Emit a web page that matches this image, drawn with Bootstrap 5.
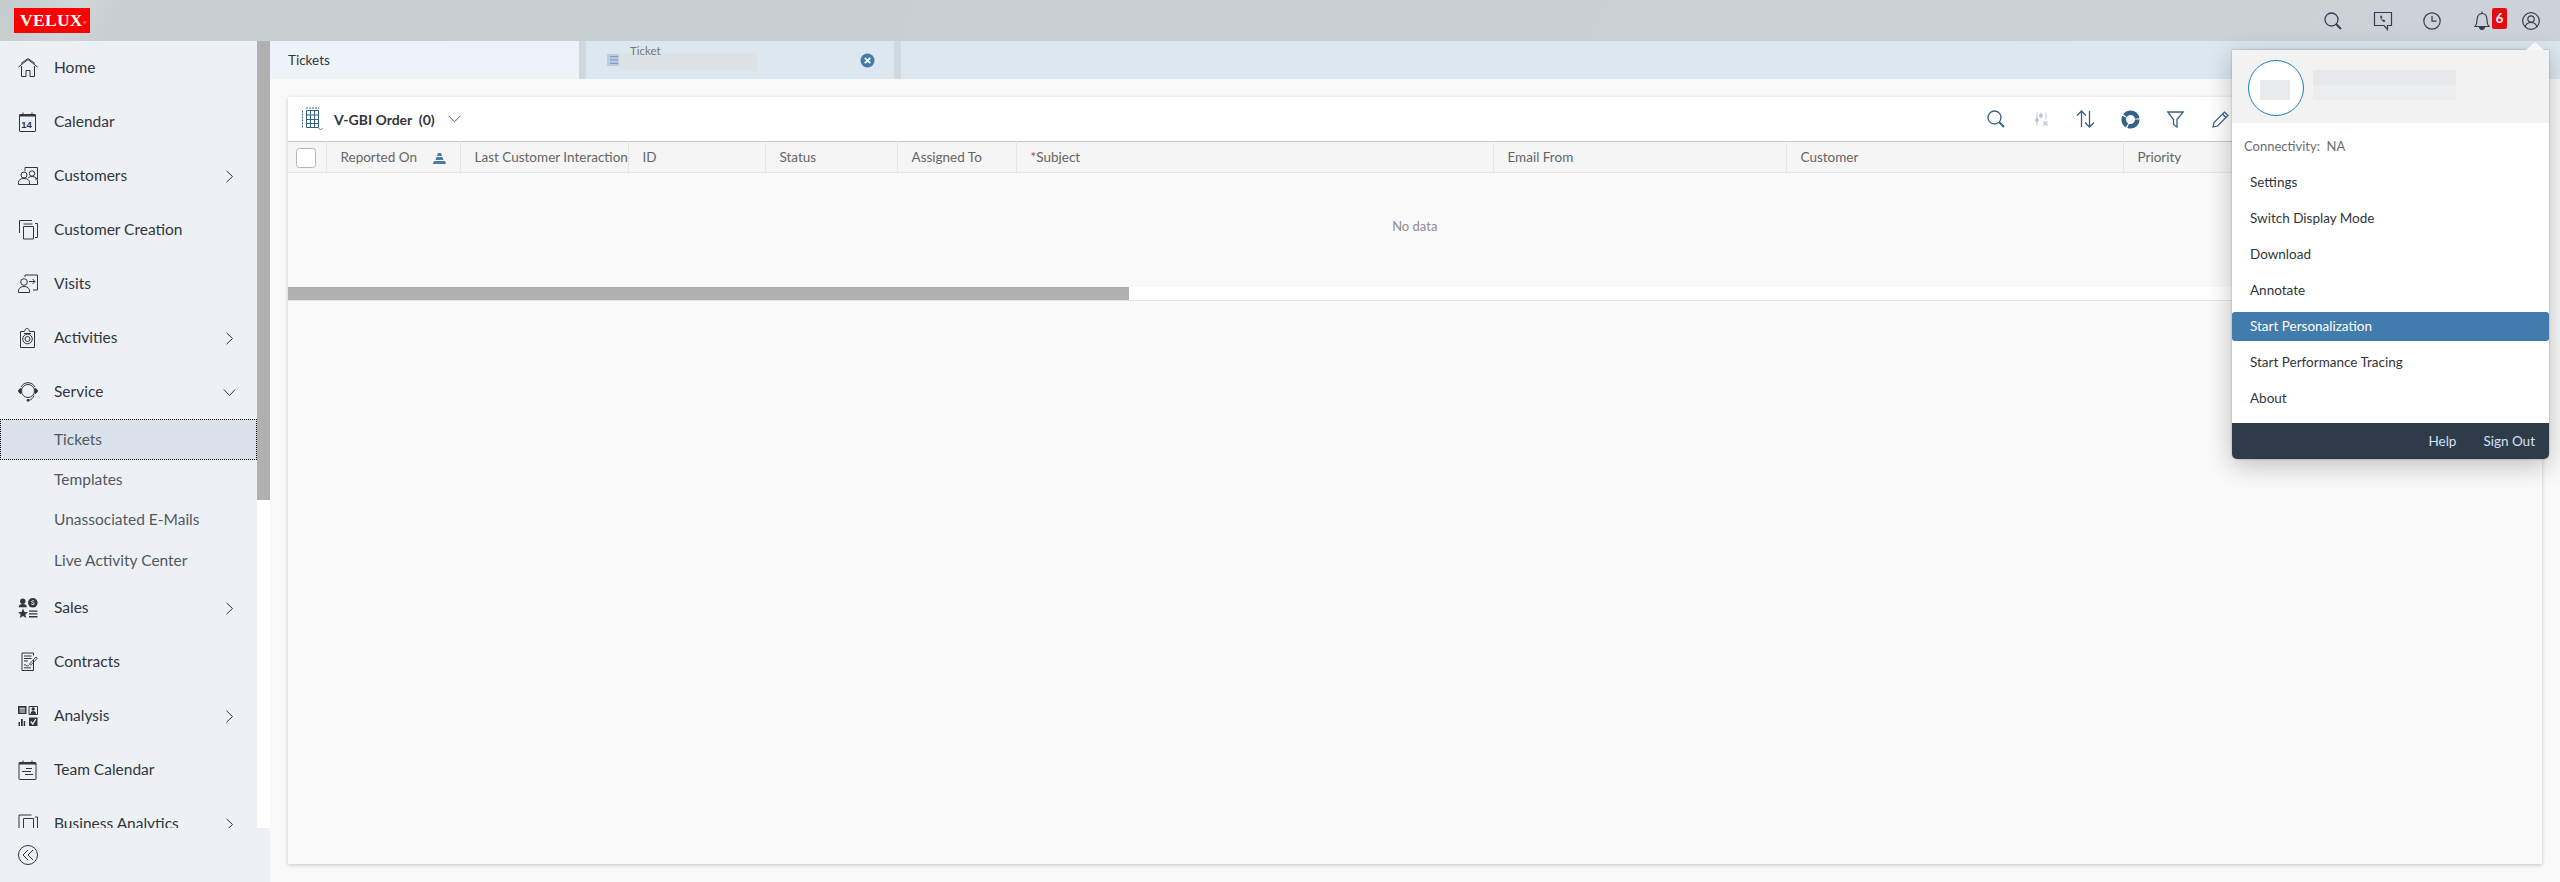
<!DOCTYPE html>
<html lang="en">
<head>
<meta charset="UTF-8" />
<title>Tickets</title>
<link href="https://cdn.jsdelivr.net/npm/bootstrap@5.3.3/dist/css/bootstrap.min.css" rel="stylesheet"/>
<style>
    html, body { height: 100%; overflow: hidden; }
    body { font-family: Lato, "Open Sans", sans-serif; color: #32363a; background: #f9f9f9; font-size: 14px; }

    /* shell bar */
    .shell-bar { height: 41px; padding-left: 14px; padding-right: 4px; background: linear-gradient(115deg, #c3cbcd 0, #d0d7d8 3%, #c6ced1 5%, #c8d0d3 40%, #ccd3d8 100%); }
    .velux-logo { width: 76px; height: 25px; padding-left: 6px; background: #f00; color: #fff; font-family: "Liberation Serif", serif; font-weight: 700; font-size: 17.5px; letter-spacing: .3px; line-height: 25px; white-space: nowrap; }
    .velux-logo sup { font-size: 5px; top: -.5em; letter-spacing: 0; }
    .shell-icon { width: 49.5px; height: 41px; display: flex; align-items: center; justify-content: center; position: relative; }
    .shell-badge { position: absolute; left: 35px; top: 8px; width: 15px; height: 21px; background: #e60a14; border-radius: 2px; color: #fff; font-size: 13px; font-weight: 700; line-height: 21px; text-align: center; }

    /* side navigation */
    .app-body { height: 841px; }
    .side-col { width: 270px; flex: none; }
    .side-top { height: 787px; }
    .side-nav { width: 257px; background: #edf1f6; overflow: hidden; }
    .side-track { width: 13px; background: #fff; }
    .side-thumb { height: 459px; background: #b0b0b0; }
    .side-foot { height: 54px; background: #edf1f6; padding-left: 18px; }
    .nav-row { height: 54px; padding-left: 18px; padding-right: 23px; font-size: 15.5px; color: #32363a; }
    .nav-ico { width: 20px; height: 20px; flex: none; margin-right: 16px; }
    .nav-sub { height: 40.5px; padding-left: 54px; padding-bottom: 1px; font-size: 15.5px; color: #53585e; }
    .nav-sub.is-current { background: #dae2ec; outline: 1px dotted #000; outline-offset: -1px; padding-bottom: 0; }
    .chev-down { margin-right: -2px; }

    /* tab strip */
    .main-col { min-width: 0; background: #f9f9f9; }
    .tab-strip { height: 38px; background: #cfd8df; gap: 7px; }
    .tab-home { width: 309px; background: #edf3f8; padding-left: 18px; font-size: 13.5px; }
    .tab-ticket { width: 308px; background: #dde7f0; position: relative; }
    .tab-rest { background: #dce7f0; }
    .tab-label { position: absolute; left: 44px; top: 1px; font-size: 11.5px; color: #74777a; z-index: 1; }
    .tab-blur { position: absolute; left: 33px; top: 12px; width: 138px; height: 18px; background: #dde2e6; }
    .tab-doc { position: absolute; left: 21px; top: 13px; }
    .tab-close { position: absolute; left: 274px; top: 12px; }

    /* worklist */
    .work-area { padding: 18px; height: 803px; }
    .work-card { width: 2254px; height: 767px; background: #f9f9f9; box-shadow: 0 1px 4px rgba(0,0,0,.22); }
    .work-tools { height: 44px; background: #fff; padding-left: 13px; }
    .work-title { font-size: 14px; font-weight: 700; margin-left: 11px; }
    .work-chev { margin-left: 13px; }
    .tool-btn { width: 45px; display: flex; justify-content: center; }
    .tool-set { position: absolute; left: 1685px; top: 0; height: 44px; }
    .grid-head { table-layout: fixed; width: 2254px; margin: 0; }
    .grid-head th { height: 31px; padding: 0 0 0 14px; background: #f5f5f5; border-top: 1px solid #c8c8c8; border-bottom: 1px solid #e5e5e5; border-right: 1px solid #e5e5e5; font-size: 13.5px; font-weight: 400; color: #666; vertical-align: middle; white-space: nowrap; overflow: hidden; box-shadow: none; }
    .grid-head td { height: 114px; background: #f9f9f9; border: 0; text-align: center; vertical-align: middle; color: #8b8e90; font-size: 13px; box-shadow: none; padding: 0 0 6px; }
    .c-chk { width: 38px; } .c-rep { width: 134px; } .c-last { width: 168px; } .c-id { width: 137px; } .c-stat { width: 132px; }
    .c-asg { width: 119px; } .c-subj { width: 477px; } .c-mail { width: 293px; } .c-cust { width: 337px; }
    .grid-head .c-chk { padding: 0 0 0 8px; }
    .grid-check { width: 20px; height: 20px; margin: 0; border-color: #b5b5b5; border-radius: 4px; vertical-align: middle; }
    .req-star { color: #c33; }
    .hscroll { height: 14px; background: #fff; border-bottom: 1px solid #e5e5e5; }
    .hscroll-thumb { width: 841px; height: 13px; background: #b0b0b0; }

    /* user popover */
    .user-pop { position: absolute; left: 2232px; top: 50px; width: 317px; height: 409px; background: #fff; border-radius: 0 0 5px 5px; box-shadow: 0 6px 26px rgba(0,0,0,.24), 0 0 2px rgba(0,0,0,.35); }
    .user-pop::before { content: ""; position: absolute; right: 5px; top: -8px; border-left: 9px solid transparent; border-right: 9px solid transparent; border-bottom: 8px solid #f6f6f6; }
    .pop-head { height: 73px; background: #f2f2f2; }
    .pop-avatar { position: absolute; left: 16px; top: 10px; width: 56px; height: 56px; background: #fff; border: 1.5px solid #1a7fc1; border-radius: 50%; }
    .pop-avatar span { position: absolute; left: 11px; top: 19px; width: 30px; height: 20px; background: #e9eaeb; }
    .pop-blur { position: absolute; left: 81px; top: 20px; width: 143px; height: 30px; background: linear-gradient(#e6e8e9 50%, #ebedee 50%); }
    .pop-conn { height: 41px; padding: 14px 0 0 12px; font-size: 13px; color: #6a6d70; }
    .pop-list .list-group-item { height: 36px; padding: 0 0 0 18px; border: 0; display: flex; align-items: center; font-size: 13.5px; color: #32363a; background: transparent; border-radius: 0; }
    .pop-list .list-group-item.active { height: 29px; margin: 3.5px 0; background: #427cac; color: #fff; border-radius: 3px; }
    .pop-foot { position: absolute; left: 0; right: 0; bottom: 0; height: 36px; background: #2f3b48; border-radius: 0 0 5px 5px; padding-right: 14px; gap: 27px; color: #cfe2f7; font-size: 13.5px; }
</style>
</head>
<body>
    <!-- barre du haut -->
    <header class="shell-bar d-flex align-items-center justify-content-between">
        <div class="velux-logo">VELUX<sup>®</sup></div>
        <div class="d-flex">
            <div class="shell-icon"><svg width="18" height="18" viewBox="0 0 18 18" fill="none" stroke="#32404c" stroke-width="1.3"><circle cx="7.500" cy="7.500" r="6.500"/><path d="M12 12l5 5" stroke-width="2"/></svg></div>
            <div class="shell-icon"><svg width="20" height="20" viewBox="0 0 20 20" fill="none" stroke="#32404c" stroke-width="1.2"><path d="M1.500 1.500h17v13h-4v4l-3.500-4H1.500z"/><path d="M8 4.500c-1 .6-1 2 0 3.800s2.300 2.800 3.600 2.600l.6-1.500-1.700-1-.8.7c-.6-.4-1-1-1.300-1.800l.9-.6-.5-2z" fill="#32404c" stroke="none"/></svg></div>
            <div class="shell-icon"><svg width="18" height="18" viewBox="0 0 18 18" fill="none" stroke="#32404c" stroke-width="1.2"><circle cx="9" cy="9" r="8.200"/><path d="M9 4v5.200h4.500"/></svg></div>
            <div class="shell-icon"><svg width="16" height="19" viewBox="0 0 16 19" fill="none" stroke="#32404c" stroke-width="1.2"><path d="M1 15.500c1.500-1.500 2-3 2-6.500 0-4 2-6.500 5-6.500s5 2.500 5 6.500c0 3.500.5 5 2 6.500z"/><path d="M8 .5v2"/><path d="M5.500 16.500c.3 1.500 1.300 2 2.500 2s2.200-.5 2.500-2z" fill="#32404c"/></svg><span class="shell-badge">6</span></div>
            <div class="shell-icon"><svg width="18" height="18" viewBox="0 0 18 18" fill="none" stroke="#32404c" stroke-width="1.2"><circle cx="9" cy="9" r="8.300"/><circle cx="9" cy="7" r="3.200"/><path d="M3.200 15c.6-3 3-4.500 5.800-4.500s5.200 1.500 5.800 4.500"/></svg></div>
        </div>
    </header>

    <div class="app-body d-flex">
        <!-- menu de gauche -->
        <aside class="side-col d-flex flex-column">
            <div class="side-top d-flex">
                <nav class="side-nav">
                    <div class="nav-row d-flex align-items-center">
                        <svg class="nav-ico" viewBox="0 0 20 20" fill="none" stroke="#32363a"><path d="M.5 9L10 1.500 19.500 9M3 5.500L10 .5l7 5"/><path d="M3.500 8v10.500h4.500v-6h4v6h4.500V8"/></svg>
                        Home
                    </div>
                    <div class="nav-row d-flex align-items-center">
                        <svg class="nav-ico" viewBox="0 0 20 20" fill="none" stroke="#32363a"><rect x="1.500" y="2.500" width="16" height="17" rx=".5"/><path d="M1.500 3.500h16" stroke-width="2"/><path d="M5 .5v2M14 .5v2"/><text x="3.200" y="15.500" font-size="9.500" font-family="Liberation Sans, sans-serif" fill="#32363a" stroke="none" font-weight="700">14</text></svg>
                        Calendar
                    </div>
                    <div class="nav-row d-flex align-items-center justify-content-between">
                        <span class="d-flex align-items-center">
                            <svg class="nav-ico" viewBox="0 0 20 20" fill="none" stroke="#32363a"><path d="M7 5V1.500h12.500V13H17"/><circle cx="6" cy="9" r="3"/><circle cx="14" cy="7.500" r="2.700"/><path d="M.5 18.500v-2c0-2.500 2-4 5.500-4s5.500 1.500 5.500 4v2z"/><path d="M10 12c1-1 2.500-1.500 4-1.500 3 0 5.500 1.500 5.500 4.500v3.500h-8"/></svg>
                            Customers
                        </span>
                        <svg width="9" height="13" viewBox="0 0 9 13" fill="none" stroke="#32363a"><path d="M1.500.8l6 5.700-6 5.700"/></svg>
                    </div>
                    <div class="nav-row d-flex align-items-center">
                        <svg class="nav-ico" viewBox="0 0 20 20" fill="none" stroke="#32363a"><path d="M1.500 13V.5H14"/><path d="M17 3.500h2.500v14H17"/><path d="M5.500 6.500h10V19h-10z"/><path d="M5.500 4h9"/></svg>
                        Customer Creation
                    </div>
                    <div class="nav-row d-flex align-items-center">
                        <svg class="nav-ico" viewBox="0 0 20 20" fill="none" stroke="#32363a"><path d="M7 3V1h12.500v15H15"/><circle cx="6" cy="8" r="3.300"/><path d="M.5 18.500v-1.500c0-3 2-4.500 5.500-4.500s5.500 1.500 5.500 4.500v1.500z"/><path d="M11 7.500h6M14.500 5l2.500 2.500L14.500 10"/></svg>
                        Visits
                    </div>
                    <div class="nav-row d-flex align-items-center justify-content-between">
                        <span class="d-flex align-items-center">
                            <svg class="nav-ico" viewBox="0 0 20 20" fill="none" stroke="#32363a"><path d="M2.500 3.500h4c.3-2 1.300-3 2.500-3s2.200 1 2.500 3h5v16h-14z"/><circle cx="9.500" cy="11" r="4.800"/><circle cx="9.500" cy="11" r="2.500"/><path d="M6 5.500h7"/></svg>
                            Activities
                        </span>
                        <svg width="9" height="13" viewBox="0 0 9 13" fill="none" stroke="#32363a"><path d="M1.500.8l6 5.700-6 5.700"/></svg>
                    </div>
                    <div class="nav-row d-flex align-items-center justify-content-between">
                        <span class="d-flex align-items-center">
                            <svg class="nav-ico" viewBox="0 0 20 20" fill="none" stroke="#32363a"><circle cx="10" cy="9" r="6.500"/><path d="M3 5C4.500 2.300 7 .7 10 .7s5.500 1.600 7 4.300"/><path d="M3 6.500C1.300 7 .5 8 .5 9s.8 2 2.500 2.500z" fill="#32363a"/><path d="M17 6.500c1.700.5 2.500 1.500 2.500 2.500s-.8 2-2.500 2.500z" fill="#32363a"/><path d="M16 13.500c-.8 2.500-2.800 4.500-5 4.700"/><circle cx="10" cy="18.300" r="1" fill="#32363a"/></svg>
                            Service
                        </span>
                        <svg class="chev-down" width="13" height="9" viewBox="0 0 13 9" fill="none" stroke="#32363a"><path d="M.8 1.500l5.700 6 5.700-6"/></svg>
                    </div>
                    <div class="nav-sub is-current d-flex align-items-center">Tickets</div>
                    <div class="nav-sub d-flex align-items-center">Templates</div>
                    <div class="nav-sub d-flex align-items-center">Unassociated E-Mails</div>
                    <div class="nav-sub d-flex align-items-center">Live Activity Center</div>
                    <div class="nav-row d-flex align-items-center justify-content-between">
                        <span class="d-flex align-items-center">
                            <svg class="nav-ico" viewBox="0 0 20 20" fill="#32363a"><circle cx="4.800" cy="3.200" r="2.700"/><path d="M.8 9.300c0-2.300 1.500-3.300 4-3.300s4 1 4 3.300z"/><circle cx="14.800" cy="4.800" r="4.800"/><path d="M5 10.500l1.500 3.400 3.600.3-2.800 2.300.9 3.500L5 18.100 1.800 20l.9-3.500L0 14.200l3.600-.3z"/><path d="M11 12.500h8.500v1.300H11zM11 15.300h8.500v1.300H11zM11 18.100h8.500v1.300H11z"/><path d="M16.300 3.300c-.4-.7-2.600-.9-2.900.2-.2 1.100 2.800.9 2.800 2.200 0 1.100-2.300 1-3 .1" fill="none" stroke="#edf1f6"/></svg>
                            Sales
                        </span>
                        <svg width="9" height="13" viewBox="0 0 9 13" fill="none" stroke="#32363a"><path d="M1.500.8l6 5.700-6 5.700"/></svg>
                    </div>
                    <div class="nav-row d-flex align-items-center">
                        <svg class="nav-ico" viewBox="0 0 20 20" fill="none" stroke="#32363a"><path d="M15.500 8v10.500H4V1h11.500v2.500"/><path d="M6 4h7.500M6 6.500h7.500M6 9h4M6 13c2-1 2 1 3 1s1-1 2 0M6 15.800h7"/><path d="M11.500 12l6.500-7 1.300 1.300-6.700 7z" stroke-width=".9"/></svg>
                        Contracts
                    </div>
                    <div class="nav-row d-flex align-items-center justify-content-between">
                        <span class="d-flex align-items-center">
                            <svg class="nav-ico" viewBox="0 0 20 20" fill="#32363a"><path d="M0 0h8.500v8H0z"/><path d="M1.500 1.800h5.500v1H1.500zM1.500 3.600h5.500v1H1.500zM1.500 5.400h5.500v1H1.500z" fill="#edf1f6"/><path d="M11 .5h8.500v8H11z" fill="none" stroke="#32363a"/><circle cx="15.200" cy="3" r="1.700"/><path d="M12.500 8c0-2 1-3 2.700-3s2.800 1 2.800 3z"/><path d="M.5 16h1.500v4H.5zM3 13h1.800v7H3zM5.700 15h1.500v5H5.700z"/><path d="M11 11.500h8.500V20H11z"/><path d="M12.800 15.500l2 2.500 3-5" fill="none" stroke="#edf1f6" stroke-width="1.300"/></svg>
                            Analysis
                        </span>
                        <svg width="9" height="13" viewBox="0 0 9 13" fill="none" stroke="#32363a"><path d="M1.500.8l6 5.700-6 5.700"/></svg>
                    </div>
                    <div class="nav-row d-flex align-items-center">
                        <svg class="nav-ico" viewBox="0 0 20 20" fill="none" stroke="#32363a"><rect x="1" y="2.500" width="17" height="17" rx=".5"/><path d="M1 3.500h17" stroke-width="2"/><path d="M5 .5v2M14 .5v2"/><path d="M8 8.500h6M4 11.500h9M7 14.500h8"/></svg>
                        Team Calendar
                    </div>
                    <div class="nav-row d-flex align-items-center justify-content-between">
                        <span class="d-flex align-items-center">
                            <svg class="nav-ico" viewBox="0 0 20 20" fill="none" stroke="#32363a"><path d="M1 16V1h12.500"/><path d="M5.500 19V4.500h10V19"/><path d="M17 3h2.500v16"/></svg>
                            Business Analytics
                        </span>
                        <svg width="9" height="13" viewBox="0 0 9 13" fill="none" stroke="#32363a"><path d="M1.500.8l6 5.700-6 5.700"/></svg>
                    </div>
                </nav>
                <div class="side-track"><div class="side-thumb"></div></div>
            </div>
            <div class="side-foot d-flex align-items-center">
                <svg width="20" height="20" viewBox="0 0 20 20" fill="none" stroke="#32363a"><circle cx="10" cy="10" r="9.500"/><path d="M10 5l-5 5 5 5M15 5l-5 5 5 5"/></svg>
            </div>
        </aside>

        <main class="main-col flex-grow-1 d-flex flex-column">
            <!-- onglets -->
            <div class="tab-strip d-flex">
                <div class="tab-home d-flex align-items-center">Tickets</div>
                <div class="tab-ticket">
                    <svg class="tab-doc" width="12" height="12" viewBox="0 0 12 12" fill="#7f9fbf"><path d="M0 0h12v12H0z" opacity=".35"/><path d="M3 2h8v1.300H3zM3 5.300h8v1.300H3zM3 8.700h8V10H3z"/></svg>
                    <span class="tab-label">Ticket</span>
                    <div class="tab-blur"></div>
                    <svg class="tab-close" width="15" height="15" viewBox="0 0 15 15"><circle cx="7.500" cy="7.500" r="7" fill="#427cac"/><path d="M4.800 4.800l5.400 5.400M10.200 4.800l-5.400 5.400" stroke="#fff" stroke-width="1.800"/></svg>
                </div>
                <div class="tab-rest flex-grow-1"></div>
            </div>

            <!-- liste des tickets -->
            <div class="work-area">
                <div class="work-card">
                    <div class="work-tools d-flex align-items-center position-relative">
                        <svg width="22" height="24" viewBox="0 0 22 24" fill="none" stroke="#346187"><path d="M1.500 3.500v18" stroke-dasharray="2 1"/><path d="M5.500 3.500h12v17h-12zM5.500 8h12M5.500 12.500h12M5.500 16.500h12M9.500 3.500v17M13.500 3.500v17"/><path d="M5 1h13" stroke-dasharray="2 1"/><path d="M17.500 21l2 2 2-2" stroke-width=".8"/></svg>
                        <span class="work-title">V-GBI Order&nbsp; (0)</span>
                        <svg class="work-chev" width="13" height="8" viewBox="0 0 13 8" fill="none" stroke="#346187"><path d="M.6.8l5.900 6 5.900-6"/></svg>
                        <div class="tool-set d-flex align-items-center">
                            <span class="tool-btn"><svg width="18" height="18" viewBox="0 0 18 18" fill="none" stroke="#346187" stroke-width="1.300"><circle cx="7.500" cy="7.500" r="6.500"/><path d="M12 12l5 5" stroke-width="2"/></svg></span>
                            <span class="tool-btn"><svg width="14" height="14" viewBox="0 0 14 14" fill="none" stroke="#b7c6d4"><path d="M3 .5v13M7 .5v6M12 .5v7"/><circle cx="3" cy="8" r="1.500" fill="#b7c6d4"/><circle cx="7" cy="3.500" r="1.500" fill="#b7c6d4"/><path d="M9.500 9.500l4 4M13.500 9.500l-4 4" stroke-width="1.300"/></svg></span>
                            <span class="tool-btn"><svg width="19" height="18" viewBox="0 0 19 18" fill="none" stroke="#346187" stroke-width="1.300"><path d="M5.500 17V1M1 5.500L5.500 1 10 5.500M13.500 1v16M9 12.500l4.500 4.500 4.500-4.500"/></svg></span>
                            <span class="tool-btn"><svg width="19" height="19" viewBox="0 0 19 19" fill="none" stroke="#346187" stroke-width="4.600"><circle cx="9.500" cy="9.500" r="6.800" stroke-dasharray="13 1.200 10 1.200 16 1.300"/></svg></span>
                            <span class="tool-btn"><svg width="17" height="17" viewBox="0 0 17 17" fill="none" stroke="#346187" stroke-width="1.300"><path d="M.8 1h15.400L10 8.500V16l-3.500-2.500v-5z"/></svg></span>
                            <span class="tool-btn"><svg width="17" height="17" viewBox="0 0 17 17" fill="none" stroke="#346187" stroke-width="1.200"><path d="M1 16l1-4.500L12.500 1 16 4.500 5.500 15z"/><path d="M10.500 3l3.500 3.500"/></svg></span>
                        </div>
                    </div>
                    <table class="table grid-head">
                        <thead>
                            <tr>
                                <th class="c-chk"><input class="form-check-input grid-check" type="checkbox" aria-label="Select all"></th>
                                <th class="c-rep">Reported On<svg class="ms-3" width="13" height="11" viewBox="0 0 13 11" fill="#4a7aa5"><path d="M5 0h3l1 3H4zM3.500 4h6l1 3h-8zM1 8h11l1 3H0z"/></svg></th>
                                <th class="c-last">Last Customer Interaction</th>
                                <th class="c-id">ID</th>
                                <th class="c-stat">Status</th>
                                <th class="c-asg">Assigned To</th>
                                <th class="c-subj"><span class="req-star">*</span>Subject</th>
                                <th class="c-mail">Email From</th>
                                <th class="c-cust">Customer</th>
                                <th>Priority</th>
                            </tr>
                        </thead>
                        <tbody>
                            <tr><td colspan="10">No data</td></tr>
                        </tbody>
                    </table>
                    <div class="hscroll"><div class="hscroll-thumb"></div></div>
                </div>
            </div>
        </main>
    </div>

    <!-- menu utilisateur -->
    <div class="user-pop">
        <div class="pop-head">
            <div class="pop-avatar"><span></span></div>
            <div class="pop-blur"></div>
        </div>
        <div class="pop-conn">Connectivity:&nbsp; NA</div>
        <div class="list-group pop-list">
            <a class="list-group-item">Settings</a>
            <a class="list-group-item">Switch Display Mode</a>
            <a class="list-group-item">Download</a>
            <a class="list-group-item">Annotate</a>
            <a class="list-group-item active">Start Personalization</a>
            <a class="list-group-item">Start Performance Tracing</a>
            <a class="list-group-item">About</a>
        </div>
        <div class="pop-foot d-flex align-items-center justify-content-end">
            <span>Help</span>
            <span>Sign Out</span>
        </div>
    </div>
    <script src="https://cdn.jsdelivr.net/npm/bootstrap@5.3.3/dist/js/bootstrap.bundle.min.js"></script>
</body>
</html>
